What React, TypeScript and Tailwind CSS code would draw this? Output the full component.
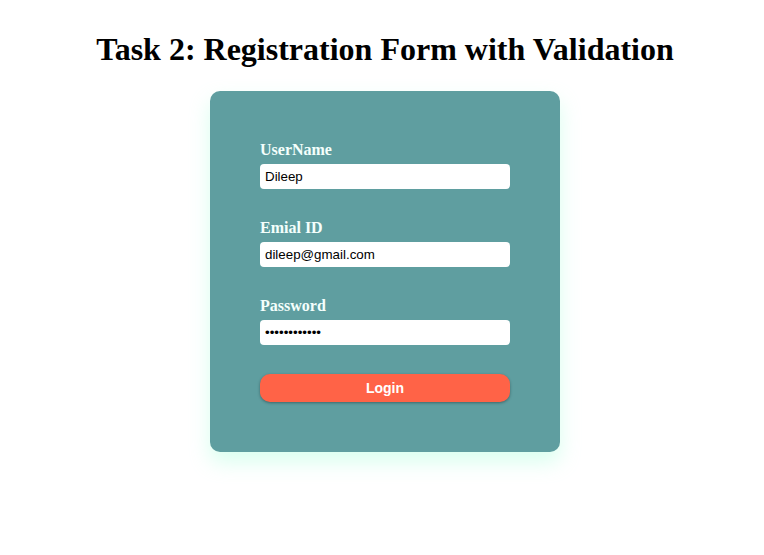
import { useState } from 'react'

const FIELDS = [
  { key: 'user', label: 'UserName', type: 'text', init: 'Dileep' },
  { key: 'email', label: 'Emial ID', type: 'email', init: 'dileep@gmail.com' },
  { key: 'pass', label: 'Password', type: 'password', init: 'dileep@12345' },
]

export default function App() {
  const [values, setValues] = useState<Record<string, string>>(
    Object.fromEntries(FIELDS.map(f => [f.key, f.init]))
  )

  return (
    <div className="min-h-[555px] bg-white pl-[6px] flex flex-col items-center font-['Liberation_Serif',serif]">
      <h1 className="mt-[31px] text-[32px] leading-[36px] font-bold text-black">
        Task 2: Registration Form with Validation
      </h1>

      {/* Card */}
      <form
        onSubmit={e => e.preventDefault()}
        className="mt-[24px] w-[350px] rounded-[10px] bg-[#5f9ea0] px-[50px] pt-[49px] pb-[50px] shadow-[0_10px_20px_rgba(170,255,220,0.45)]"
      >
        {FIELDS.map(f => (
          <div key={f.key} className="mb-[29px]">
            <label className="block text-[16px] leading-[20px] font-bold text-[#f4fffc]">{f.label}</label>
            <input
              type={f.type}
              value={values[f.key]}
              onChange={e => setValues(v => ({ ...v, [f.key]: e.target.value }))}
              className="mt-[4px] block w-full h-[25px] rounded-[4px] bg-white px-[5px] text-[13.33px] text-black font-['Liberation_Sans',Arial,sans-serif] outline-none"
            />
          </div>
        ))}

        <button
          type="submit"
          className="block w-full h-[28px] rounded-[10px] bg-[#ff6347] text-white text-[14px] font-bold font-['Liberation_Sans',Arial,sans-serif] shadow-[0_1px_3px_rgba(0,0,0,0.35)]"
        >
          Login
        </button>
      </form>
    </div>
  )
}
